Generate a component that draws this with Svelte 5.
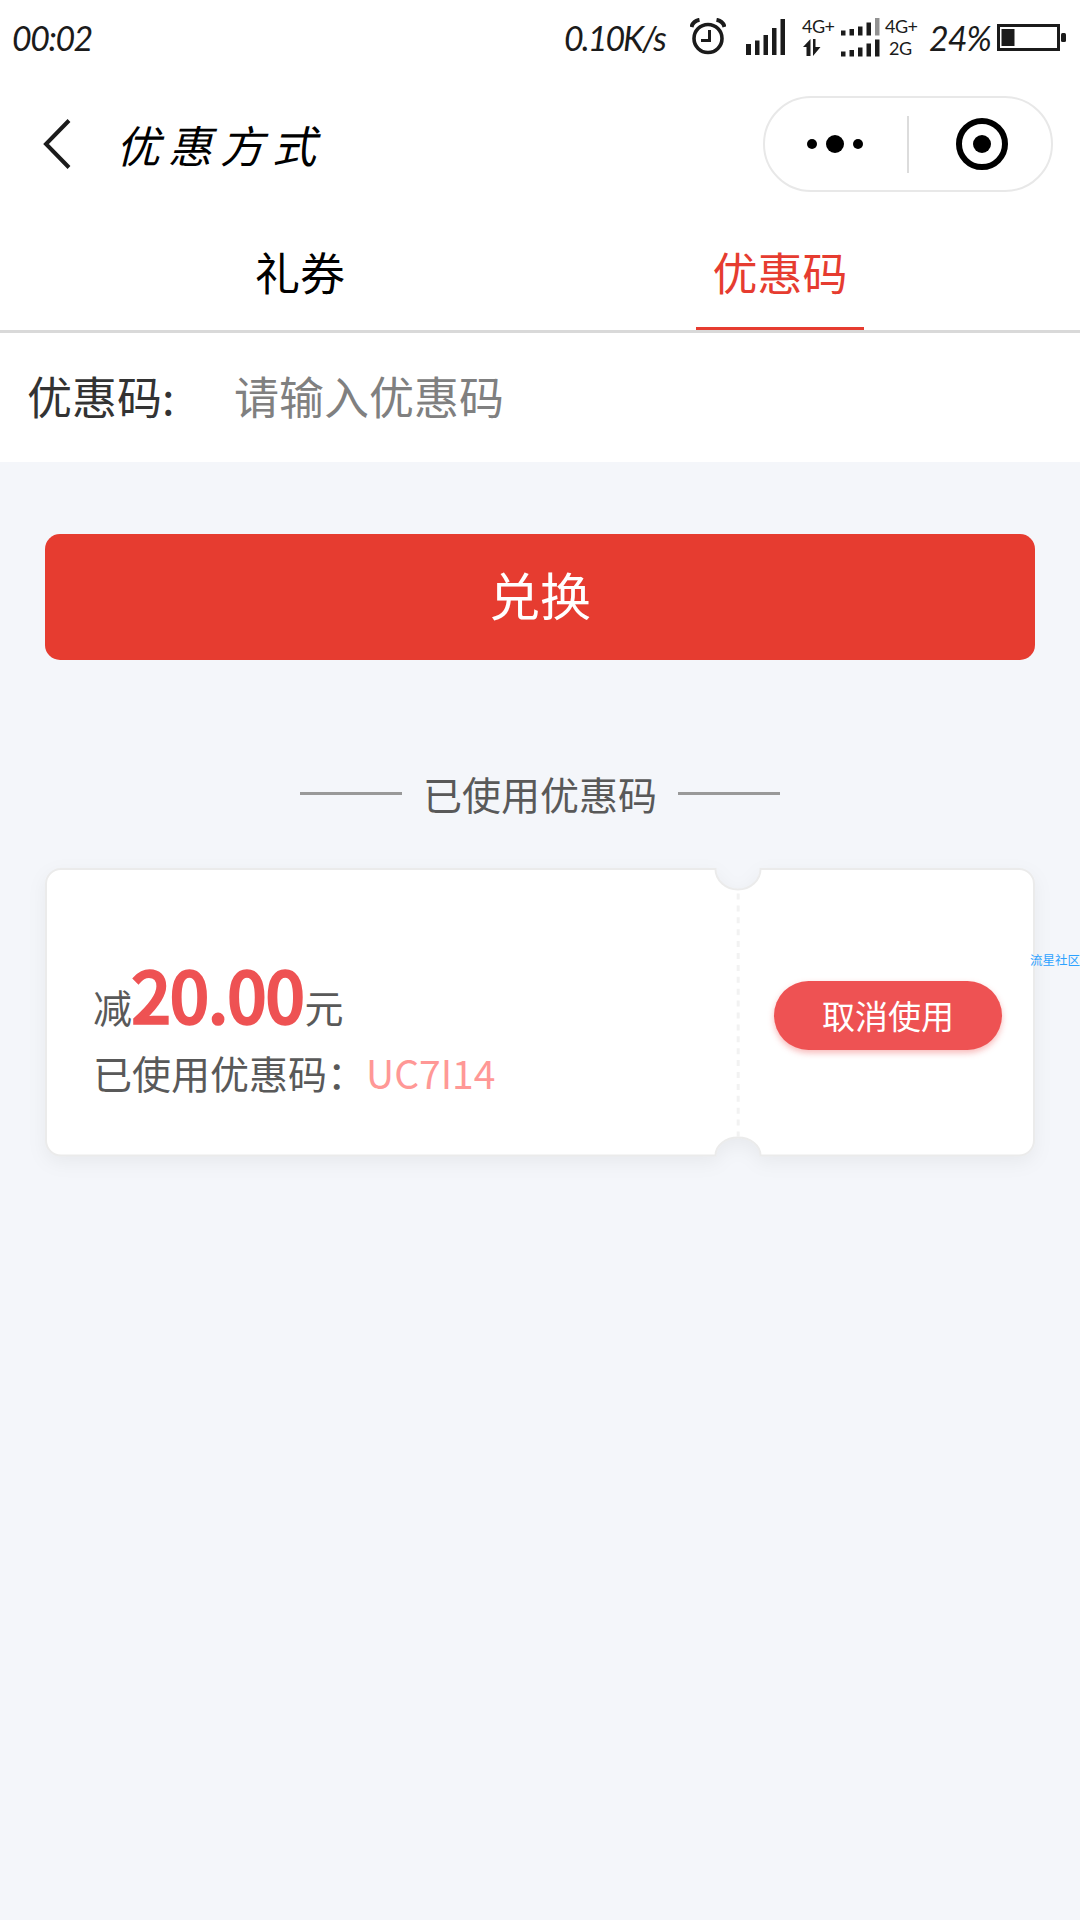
<script>
  let code = $state('');
  let active = $state(1);
  const tabs = ['礼券', '优惠码'];
  const coupon = { amount: '20.00', code: 'UC7I14' };
</script>

<div class="screen">
  <header class="status">
    <span class="hand time">00:02</span>
    <span class="hand speed">0.10K/s</span>
    <svg class="alarm" width="36" height="38" viewBox="0 0 36 38" fill="none" stroke="#1b1b1b">
      <circle cx="18" cy="20.5" r="14" stroke-width="3.6" />
      <path d="M19.500 12v10.500h-8.500" stroke-width="3" />
      <path d="M1.500 9Q3 3 9.500 1.800M34.500 9Q33 3 26.500 1.800" stroke-width="4" />
    </svg>
    <svg class="signal" width="40" height="36" viewBox="0 0 40 36" fill="#1b1b1b">
      <path d="M0 25h5v11h-5zM9 21.500h4.500v14.500h-4.500zM17.500 16h4.500v20h-4.500zM26 9h4.500v27h-4.500zM34.500 0h4.500v36h-4.500z" />
    </svg>
    <span class="net first">
      <span>4G+</span>
      <svg width="18" height="17" viewBox="0 0 18 17" fill="#1b1b1b">
        <path d="M7.500 0v17H3.500V8H0zM10 0h2.500v8H17.500L10 17z" />
      </svg>
    </span>
    <svg class="dual" width="39" height="39" viewBox="0 0 39 39" fill="#1b1b1b">
      <path d="M0 12.500h4.500v5h-4.500zM8.500 11h4.500v6.500h-4.500zM17 8.500h4.500v9h-4.500zM25.500 4.500h4.500v13h-4.500z" />
      <path d="M34 0h4.500v17.500h-4.500z" fill="#929292" />
      <path d="M0 33.500h4.500v5h-4.500zM8.500 32h4.500v6.500h-4.500zM17 29.500h4.500v9h-4.500zM25.500 25.500h4.500v13h-4.500zM34 21.500h4.500v17h-4.500z" />
    </svg>
    <span class="net second"><span>4G+</span><span>2G</span></span>
    <span class="hand percent">24%</span>
    <svg class="battery" width="70" height="28" viewBox="0 0 70 28">
      <rect x="1.500" y="1.500" width="60" height="24" fill="none" stroke="#1b1b1b" stroke-width="3" />
      <path d="M4.500 5h13v17h-13z" fill="#1b1b1b" />
      <rect x="64" y="9" width="5" height="9" rx="1.500" fill="#1b1b1b" />
    </svg>
  </header>

  <nav class="nav">
    <svg class="back" width="28" height="52" viewBox="0 0 28 52" fill="none" stroke="#1b1b1b" stroke-width="4">
      <path d="M26 2.500L3 26L26 49.500" />
    </svg>
    <h1>优惠方式</h1>
    <div class="capsule">
      <svg width="56" height="18" viewBox="0 0 56 18">
        <circle cx="5" cy="9" r="5" /><circle cx="28" cy="9" r="9" /><circle cx="51" cy="9" r="5" />
      </svg>
      <i></i>
      <svg width="52" height="52" viewBox="0 0 52 52">
        <circle cx="26" cy="26" r="23" fill="none" stroke="#000" stroke-width="6" /><circle cx="26" cy="26" r="9" />
      </svg>
    </div>
  </nav>

  <div class="tabs">
    {#each tabs as tab, i}
      <button class="tab" class:active={active === i} onclick={() => (active = i)}><span>{tab}</span></button>
    {/each}
  </div>

  <label class="field">
    <span>优惠码:</span>
    <input bind:value={code} placeholder="请输入优惠码" />
  </label>

  <button class="redeem">兑换</button>

  <div class="divider"><i></i><span>已使用优惠码</span><i></i></div>

  <section class="card">
    <svg class="ticket" width="990" height="288" viewBox="0 0 990 288">
      <path
        d="M16 1H670.500A22.500 20.500 0 0 0 715.500 1H974A15 15 0 0 1 989 16V272.500A15 15 0 0 1 974 287.500H715.500A22.500 18 0 0 0 670.500 287.500H16A15 15 0 0 1 1 272.500V16A15 15 0 0 1 16 1Z"
        fill="#fff"
        stroke="#ebebeb"
        stroke-width="2"
      />
      <path d="M693.200 25.500V269" stroke="#f2f2f2" stroke-width="3" stroke-dasharray="6 5.900" />
    </svg>
    <div class="info">
      <div class="amount">减<b>{coupon.amount}</b>元</div>
      <div class="used">已使用优惠码：<em>{coupon.code}</em></div>
    </div>
    <div class="action"><button>取消使用</button></div>
    <span class="mark">流星社区</span>
  </section>
</div>

<style>
  :global(body) { margin: 0; background: #f4f6fa; }
  .screen {
    width: 1080px;
    height: 1920px;
    overflow: hidden;
    background: #f4f6fa;
    font-family: "Noto Sans CJK SC", sans-serif;
    color: #595959;
  }
  button { border: 0; padding: 0; background: none; font: inherit; }
  i { display: block; }
  svg { display: block; flex: none; }

  .status {
    height: 78px;
    background: #fff;
    display: flex;
    align-items: flex-start;
    color: #1b1b1b;
  }
  .hand {
    flex: none;
    font: italic 400 34px/40px "Lato", sans-serif;
    margin-top: 18px;
    white-space: nowrap;
  }
  .time { width: 80px; margin-left: 12px; letter-spacing: -1.500px; }
  .speed { width: 100px; margin-left: 472px; letter-spacing: -2px; }
  .alarm { margin: 18px 0 0 26px; }
  .signal { margin: 19px 0 0 20px; }
  .net {
    flex: none;
    display: flex;
    flex-direction: column;
    font: 18px/21px "Lato", sans-serif;
    letter-spacing: -0.500px;
  }
  .net span { height: 22px; }
  .first { width: 33px; margin: 16px 0 0 16px; }
  .first svg { margin: 1px 0 0 1px; }
  .dual { margin: 18px 0 0 6px; }
  .second { width: 31px; margin: 16px 0 0 5px; }
  .second span + span { padding-left: 4px; }
  .percent { width: 60px; margin-left: 13px; letter-spacing: -1px; }
  .battery { margin: 24px 0 0 8px; }

  .nav {
    height: 132px;
    background: #fff;
    display: flex;
    align-items: flex-start;
  }
  .back { margin: 40px 0 0 43px; }
  h1 {
    margin: 34px 0 0 45px;
    color: #000;
    font: italic 400 44px/64px "Noto Sans CJK SC", sans-serif;
    letter-spacing: 8px;
  }
  .capsule {
    box-sizing: border-box;
    width: 290px;
    height: 96px;
    margin: 18px 27px 0 auto;
    border: 2px solid #e8e8e8;
    border-radius: 48px;
    display: flex;
    align-items: center;
  }
  .capsule svg:first-child { margin-left: 42px; }
  .capsule i { width: 2px; height: 57px; margin: 0 47px 0 44px; background: #dcdcdc; }

  .tabs {
    box-sizing: border-box;
    height: 123px;
    padding: 0 60px;
    background: #fff;
    border-bottom: 3px solid #d9d9d9;
    display: grid;
    grid-template-columns: 1fr 1fr;
  }
  .tab { display: flex; justify-content: center; color: #000; font-size: 45px; line-height: 66px; }
  .tab span {
    box-sizing: border-box;
    width: 168px;
    height: 120px;
    padding-top: 29px;
    border-bottom: 3px solid transparent;
  }
  .tab.active { color: #e63c30; }
  .tab.active span { border-color: #e63c30; }

  .field {
    box-sizing: border-box;
    height: 129px;
    padding: 0 0 5px 27px;
    background: #fff;
    display: flex;
    align-items: center;
    font-size: 45px;
    color: #333;
  }
  .field span { width: 207px; }
  .field input { border: 0; padding: 0; outline: 0; width: 700px; height: 66px; background: none; font: inherit; }
  .field input::placeholder { color: #808080; opacity: 1; }

  .redeem {
    display: block;
    box-sizing: border-box;
    width: 990px;
    height: 126px;
    margin: 72px auto 0;
    padding-bottom: 6px;
    border-radius: 15px;
    background: #e63c30;
    color: #fff;
    font-size: 51px;
  }

  .divider {
    display: flex;
    justify-content: center;
    align-items: center;
    height: 58px;
    margin-top: 104px;
    font-size: 39px;
    line-height: 58px;
  }
  .divider i { width: 102px; height: 3px; background: #999; }
  .divider span { width: 276px; text-align: center; }

  .card { position: relative; height: 288px; margin: 46px 45px 0; display: flex; }
  .ticket { position: absolute; inset: 0; overflow: visible; filter: drop-shadow(0 6px 9px rgba(0, 0, 0, 0.05)); }
  .info { position: relative; width: 693px; padding: 78px 0 0 48px; box-sizing: border-box; font-size: 39px; }
  .amount { height: 97px; line-height: 94px; white-space: nowrap; }
  .amount b { font-size: 69px; font-weight: 400; color: #ee5253; -webkit-text-stroke: 3.600px #ee5253; }
  .used { height: 58px; line-height: 58px; white-space: nowrap; }
  .used em { font-style: normal; color: #ff9896; }
  .action { position: relative; flex: 1; padding: 113px 0 0 36px; }
  .action button {
    box-sizing: border-box;
    width: 228px;
    height: 69px;
    padding-bottom: 1px;
    border-radius: 35px;
    background: #ee5253;
    color: #fff;
    font-size: 33px;
    box-shadow: 0 3px 6px rgba(238, 82, 83, 0.4);
  }
  .mark {
    position: absolute;
    right: -45px;
    top: 82px;
    width: 52px;
    text-align: right;
    font-size: 12.500px;
    line-height: 19px;
    white-space: nowrap;
    color: #2da2ff;
  }
</style>
